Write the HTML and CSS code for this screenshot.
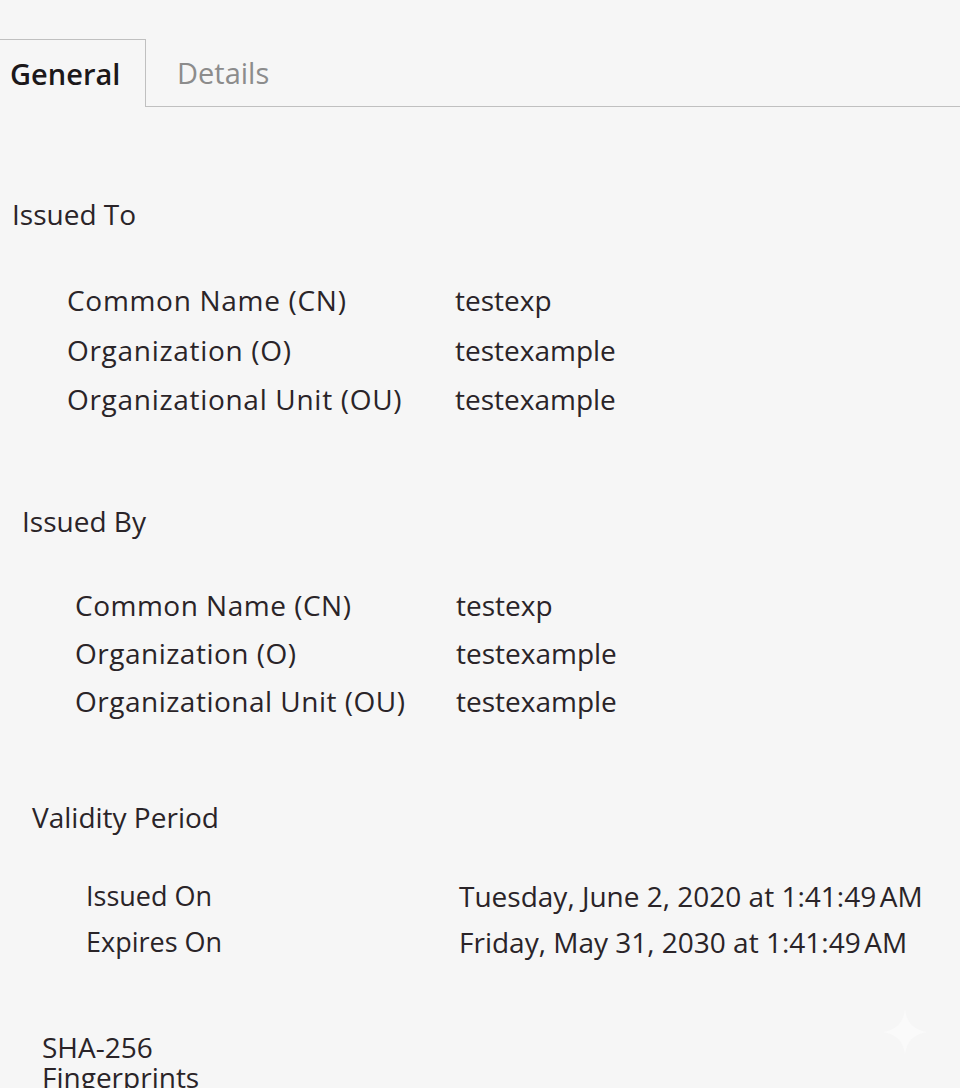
FILE: index.html
```html
<!DOCTYPE html>
<html lang="en">
<head>
<meta charset="utf-8">
<title>Certificate Viewer</title>
<link rel="stylesheet" href="styles.css">
</head>
<body>
<div class="viewer">
  <nav class="tabbar">
    <div class="tab tab-active">General</div>
    <div class="tab-rest"><span class="tab">Details</span></div>
  </nav>

  <section class="group group-to">
    <h2 class="group-title">Issued To</h2>
    <dl class="fields">
      <dt>Common Name (CN)</dt><dd>testexp</dd>
      <dt>Organization (O)</dt><dd>testexample</dd>
      <dt>Organizational Unit (OU)</dt><dd>testexample</dd>
    </dl>
  </section>

  <section class="group group-by">
    <h2 class="group-title">Issued By</h2>
    <dl class="fields">
      <dt>Common Name (CN)</dt><dd>testexp</dd>
      <dt>Organization (O)</dt><dd>testexample</dd>
      <dt>Organizational Unit (OU)</dt><dd>testexample</dd>
    </dl>
  </section>

  <section class="group group-validity">
    <h2 class="group-title">Validity Period</h2>
    <dl class="fields">
      <dt>Issued On</dt><dd>Tuesday, June 2, 2020 at 1:41:49&#8239;AM</dd>
      <dt>Expires On</dt><dd>Friday, May 31, 2030 at 1:41:49&#8239;AM</dd>
    </dl>
  </section>

  <section class="group group-fp">
    <h2 class="group-title">SHA-256<br>Fingerprints</h2>
  </section>

  <svg class="sparkle" viewBox="0 0 40 40" aria-hidden="true"><path d="M20 0 C22 12 28 18 40 20 C28 22 22 28 20 40 C18 28 12 22 0 20 C12 18 18 12 20 0 Z"/></svg>
</div>
</body>
</html>
```

FILE: styles.css
```css
html, body {
  margin: 0;
  padding: 0;
  background: #f6f6f6;
}

body {
  font-family: "Open Sans", "Noto Sans", "Liberation Sans", sans-serif;
  font-size: 28px;
  color: #2a2428;
  overflow: hidden;
}

.viewer {
  position: relative;
  box-sizing: border-box;
  height: 1088px;
  padding-top: 39px;
}

/* Tabs */
.tabbar {
  display: flex;
  height: 68px;
}

.tab {
  font-size: 29px;
  line-height: 68px;
}

.tab-active {
  width: 135px;
  padding-left: 10px;
  border-top: 1px solid #c0c0c0;
  border-right: 1px solid #c0c0c0;
  font-weight: 600;
  color: #1c181a;
}

.tab-rest {
  flex: 1;
  padding-left: 31px;
  border-bottom: 1px solid #c0c0c0;
  color: #8c8c8c;
}

/* Groups */
.group-title {
  margin: 0;
  font-size: 28px;
  font-weight: 400;
  line-height: 40px;
}

.fields {
  display: grid;
  margin: 0;
}

.fields dt,
.fields dd {
  margin: 0;
}

.group-to {
  margin-top: 87px;
  padding-left: 12px;
}
.group-to .fields {
  grid-template-columns: 388px 1fr;
  padding-left: 55px;
  margin-top: 42px;
  line-height: 49.5px;
}
.group-to dt {
  letter-spacing: 0.7px;
}

.group-by {
  margin-top: 76px;
  padding-left: 22px;
}
.group-by .fields {
  grid-template-columns: 381px 1fr;
  padding-left: 53px;
  margin-top: 40px;
  line-height: 48px;
}
.group-by dt {
  letter-spacing: 0.5px;
}

.group-validity {
  margin-top: 72px;
  padding-left: 32px;
}
.group-validity .fields {
  grid-template-columns: 373px 1fr;
  padding-left: 54px;
  margin-top: 36px;
  line-height: 46px;
}
.group-validity dt {
  font-size: 27px;
}

.group-fp {
  margin-top: 67px;
  padding-left: 42px;
}
.group-fp .group-title {
  line-height: 30px;
}

.sparkle {
  position: absolute;
  left: 883px;
  top: 1010px;
  width: 44px;
  height: 44px;
  fill: #fafafa;
}
```
